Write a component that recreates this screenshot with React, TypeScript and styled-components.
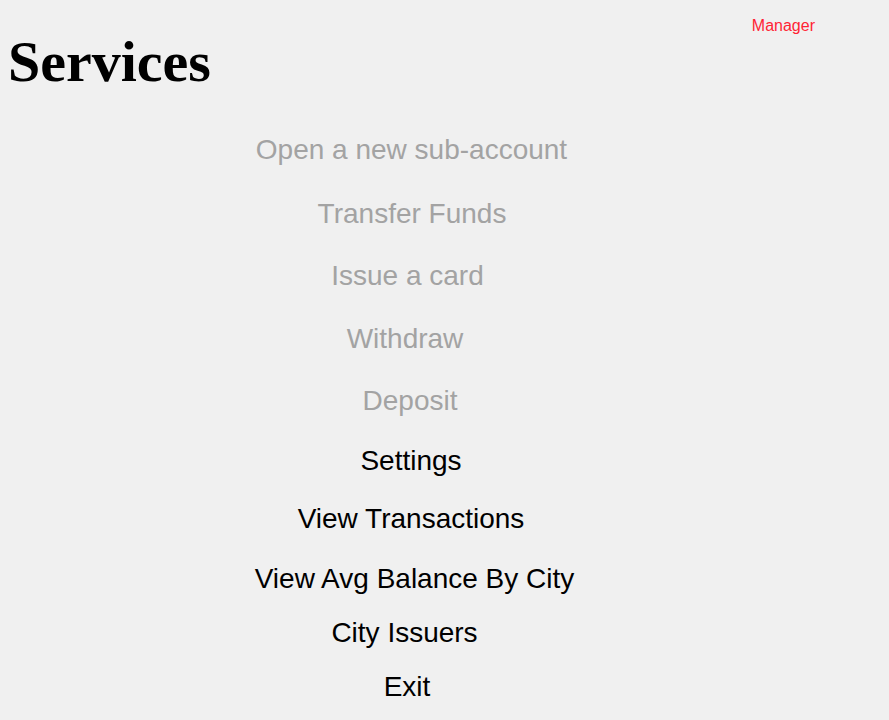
import styled, { createGlobalStyle } from 'styled-components';

const GlobalStyle = createGlobalStyle`
	html, body {
		margin: 0;
		padding: 0;
		background: #f0f0f0;
	}
`;

const Page = styled.div`
	min-height: 720px;
	background: #f0f0f0;
	display: flex;
	flex-direction: column;
`;

const Header = styled.header`
	display: flex;
	justify-content: space-between;
	align-items: flex-start;
	padding: 0 74px 0 8px;
`;

const Title = styled.h1`
	margin: 33px 0 0;
	font-family: "Liberation Serif", "Times New Roman", serif;
	font-size: 58px;
	font-weight: 700;
	line-height: 57px;
	color: #000;
`;

const Role = styled.span`
	margin-top: 17px;
	font-family: "Liberation Sans", Arial, sans-serif;
	font-size: 16px;
	line-height: 18px;
	color: #ff1f35;
`;

const Menu = styled.nav`
	width: 820px;
	margin-top: 44px;
	display: flex;
	flex-direction: column;
	align-items: center;
`;

const MenuItem = styled.button<{ $disabled?: boolean; $top: number; $nudge: number }>`
	margin: ${ ({ $top }) => $top }px 0 0 ${ ({ $nudge }) => $nudge * 2 }px;
	padding: 0;
	border: none;
	background: none;
	font-family: "Liberation Sans", Arial, sans-serif;
	font-size: 28px;
	line-height: 32px;
	white-space: nowrap;
	color: ${ ({ $disabled }) => $disabled ? '#a3a3a3' : '#000' };
	cursor: ${ ({ $disabled }) => $disabled ? 'default' : 'pointer' };
`;

const items = [
	{ label: 'Open a new sub-account', disabled: true, top: 0, nudge: 1.5 },
	{ label: 'Transfer Funds', disabled: true, top: 32, nudge: 2 },
	{ label: 'Issue a card', disabled: true, top: 30, nudge: -2.5 },
	{ label: 'Withdraw', disabled: true, top: 31, nudge: -5 },
	{ label: 'Deposit', disabled: true, top: 30, nudge: 0 },
	{ label: 'Settings', disabled: false, top: 28, nudge: 1 },
	{ label: 'View Transactions', disabled: false, top: 26, nudge: 1 },
	{ label: 'View Avg Balance By City', disabled: false, top: 28, nudge: 4.5 },
	{ label: 'City Issuers', disabled: false, top: 22, nudge: -5.5 },
	{ label: 'Exit', disabled: false, top: 22, nudge: -3 },
];

const App = () => {
	return (
		<>
			<GlobalStyle />
			<Page>
				<Header>
					<Title>Services</Title>
					<Role>Manager</Role>
				</Header>
				<Menu>
					{
						items.map((item) => (
							<MenuItem
								key={ item.label }
								$disabled={ item.disabled }
								$top={ item.top }
								$nudge={ item.nudge }
							>
								{ item.label }
							</MenuItem>
						))
					}
				</Menu>
			</Page>
		</>
	);
};

export default App;
